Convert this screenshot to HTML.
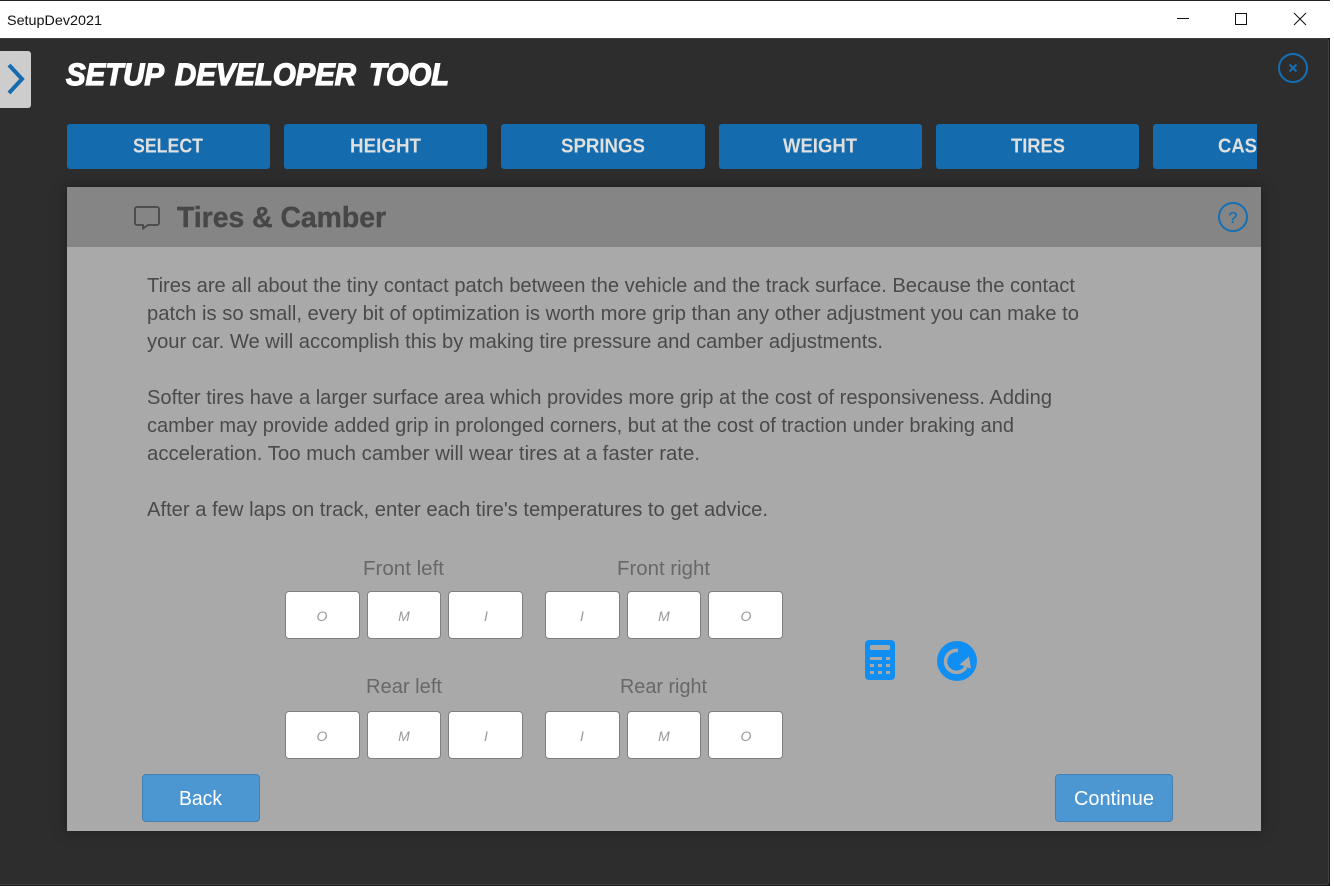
<!DOCTYPE html>
<html><head><meta charset="utf-8"><title>SetupDev2021</title>
<style>
html,body{margin:0;padding:0;width:1334px;height:886px;overflow:hidden;background:#fff}
div{position:absolute;box-sizing:border-box}
svg{position:absolute;left:0;top:0}
text{font-family:"Liberation Sans",sans-serif}
.tab{top:124px;height:45px;background:#146bad;border-radius:3px}
.in{width:75px;height:48px;background:#fff;border:1px solid #808080;border-radius:4px}
.btn{top:774px;width:118px;height:48px;background:#4c96d2;border:1px solid #4480b2;border-radius:4px}
</style></head><body>
<div style="left:0;top:0;width:1330px;height:886px;background:#1a1a1a"></div>
<div style="left:-3px;top:38px;width:1332px;height:847px;background:#2d2d2d;border:1px solid #424242;border-radius:3px"></div>
<div style="left:0;top:0;width:1330px;height:38px;background:#fff;border-top:1px solid #222"></div>
<div style="left:0;top:51px;width:31px;height:57px;background:#cdcdcd;border-radius:0 3px 3px 0"></div>
<div class="tab" style="left:67px;width:203px"></div>
<div class="tab" style="left:284px;width:203px"></div>
<div class="tab" style="left:501px;width:204px"></div>
<div class="tab" style="left:719px;width:203px"></div>
<div class="tab" style="left:936px;width:203px"></div>
<div class="tab" style="left:1153px;width:104px;border-radius:3px 0 0 3px"></div>
<div style="left:67px;top:187px;width:1194px;height:644px;background:#a9a9a9;box-shadow:0 0 14px rgba(0,0,0,.35)"></div>
<div style="left:67px;top:187px;width:1194px;height:60px;background:#858585"></div>
<div class="in" style="left:285px;top:591px"></div>
<div class="in" style="left:367px;top:591px;width:74px"></div>
<div class="in" style="left:448px;top:591px"></div>
<div class="in" style="left:545px;top:591px"></div>
<div class="in" style="left:627px;top:591px;width:74px"></div>
<div class="in" style="left:708px;top:591px"></div>
<div class="in" style="left:285px;top:711px"></div>
<div class="in" style="left:367px;top:711px;width:74px"></div>
<div class="in" style="left:448px;top:711px"></div>
<div class="in" style="left:545px;top:711px"></div>
<div class="in" style="left:627px;top:711px;width:74px"></div>
<div class="in" style="left:708px;top:711px"></div>
<div class="btn" style="left:142px"></div>
<div class="btn" style="left:1055px"></div>
<svg width="1334" height="886" viewBox="0 0 1334 886">
<defs><clipPath id="c"><rect x="147.500" y="270" width="1000" height="260"/></clipPath></defs>
<text x="7" y="25" font-size="14" fill="#111" textLength="95" lengthAdjust="spacingAndGlyphs">SetupDev2021</text>
<path d="M1177 18.500h12" stroke="#111" fill="none"/>
<rect x="1235.500" y="13.500" width="11" height="11" fill="none" stroke="#111"/>
<path d="M1294 13l12 12M1306 13l-12 12" stroke="#111" fill="none"/>
<path d="M9 65l13 14-13 14" fill="none" stroke="#146bad" stroke-width="4"/>
<g font-size="31" font-weight="700" font-style="italic" fill="#fff" stroke="#fff" stroke-width="1.300" text-rendering="geometricPrecision">
<text x="66" y="85" textLength="98" lengthAdjust="spacingAndGlyphs">SETUP</text>
<text x="175" y="85" textLength="181" lengthAdjust="spacingAndGlyphs">DEVELOPER</text>
<text x="369" y="85" textLength="80" lengthAdjust="spacingAndGlyphs">TOOL</text>
</g>
<circle cx="1293" cy="68" r="14" fill="none" stroke="#146fb5" stroke-width="2"/>
<path d="M1289.500 64.500l7 7M1296.500 64.500l-7 7" stroke="#146fb5" stroke-width="2" fill="none"/>
<g font-size="20" font-weight="700" fill="#e0e0e0">
<text x="133" y="152.500" textLength="70" lengthAdjust="spacingAndGlyphs">SELECT</text>
<text x="350" y="152.500" textLength="71" lengthAdjust="spacingAndGlyphs">HEIGHT</text>
<text x="561" y="152.500" textLength="84" lengthAdjust="spacingAndGlyphs">SPRINGS</text>
<text x="783" y="152.500" textLength="74" lengthAdjust="spacingAndGlyphs">WEIGHT</text>
<text x="1011" y="152.500" textLength="54" lengthAdjust="spacingAndGlyphs">TIRES</text>
<text x="1218" y="152.500" textLength="39" lengthAdjust="spacingAndGlyphs">CAS</text>
</g>
<path d="M137 207h20a2 2 0 0 1 2 2v14a2 2 0 0 1-2 2h-9l-5 3.500v-3.500h-6a2 2 0 0 1-2-2v-14a2 2 0 0 1 2-2z" fill="none" stroke="#474747" stroke-width="1.800"/>
<text x="177" y="227" font-size="29" font-weight="700" fill="#474747" stroke="#474747" stroke-width=".4" textLength="209" lengthAdjust="spacingAndGlyphs">Tires &amp; Camber</text>
<circle cx="1233" cy="217" r="14" fill="none" stroke="#146fb5" stroke-width="2"/>
<text x="1233" y="223" font-size="16" fill="#146fb5" stroke="#146fb5" stroke-width=".3" text-anchor="middle">?</text>
<g font-size="20" fill="#4a4a4a" clip-path="url(#c)">
<text x="147" y="292" textLength="928" lengthAdjust="spacingAndGlyphs">Tires are all about the tiny contact patch between the vehicle and the track surface. Because the contact</text>
<text x="147" y="320" textLength="932" lengthAdjust="spacingAndGlyphs">patch is so small, every bit of optimization is worth more grip than any other adjustment you can make to</text>
<text x="147" y="348" textLength="736" lengthAdjust="spacingAndGlyphs">your car. We will accomplish this by making tire pressure and camber adjustments.</text>
<text x="147" y="404" textLength="905" lengthAdjust="spacingAndGlyphs">Softer tires have a larger surface area which provides more grip at the cost of responsiveness. Adding</text>
<text x="147" y="432" textLength="867" lengthAdjust="spacingAndGlyphs">camber may provide added grip in prolonged corners, but at the cost of traction under braking and</text>
<text x="147" y="460" textLength="553" lengthAdjust="spacingAndGlyphs">acceleration. Too much camber will wear tires at a faster rate.</text>
<text x="147" y="516" textLength="621" lengthAdjust="spacingAndGlyphs">After a few laps on track, enter each tire's temperatures to get advice.</text>
</g>
<g font-size="20" fill="#686868">
<text x="363" y="575" textLength="81" lengthAdjust="spacingAndGlyphs">Front left</text>
<text x="617" y="575" textLength="93" lengthAdjust="spacingAndGlyphs">Front right</text>
<text x="366" y="693" textLength="76" lengthAdjust="spacingAndGlyphs">Rear left</text>
<text x="620" y="693" textLength="87" lengthAdjust="spacingAndGlyphs">Rear right</text>
</g>
<g font-size="14" font-style="italic" fill="#999" text-anchor="middle">
<text x="322" y="621">O</text><text x="404" y="621">M</text><text x="486" y="621">I</text>
<text x="582" y="621">I</text><text x="664" y="621">M</text><text x="746" y="621">O</text>
<text x="322" y="741">O</text><text x="404" y="741">M</text><text x="486" y="741">I</text>
<text x="582" y="741">I</text><text x="664" y="741">M</text><text x="746" y="741">O</text>
</g>
<rect x="865" y="640" width="30" height="40" rx="4" fill="#118ef2"/>
<rect x="870" y="645" width="20" height="5" rx="1.500" fill="#a9a9a9"/>
<g fill="#a9a9a9">
<rect x="870" y="657" width="12" height="3"/><rect x="886" y="657" width="4" height="3"/>
<rect x="870" y="664" width="4" height="3"/><rect x="878" y="664" width="4" height="3"/><rect x="886" y="664" width="4" height="3"/>
<rect x="870" y="671" width="4" height="3"/><rect x="878" y="671" width="4" height="3"/><rect x="886" y="671" width="4" height="3"/>
</g>
<circle cx="957" cy="661" r="20" fill="#118ef2"/>
<path d="M958 650.500A11 11 0 1 0 966 667" fill="none" stroke="#a9a9a9" stroke-width="3.500"/>
<path d="M969 656.500L959.500 664.500 971 668.500z" fill="#a9a9a9"/>
<text x="179" y="805" font-size="20" fill="#fff" textLength="43" lengthAdjust="spacingAndGlyphs">Back</text>
<text x="1074" y="805" font-size="20" fill="#fff" textLength="80" lengthAdjust="spacingAndGlyphs">Continue</text>
</svg>
</body></html>
